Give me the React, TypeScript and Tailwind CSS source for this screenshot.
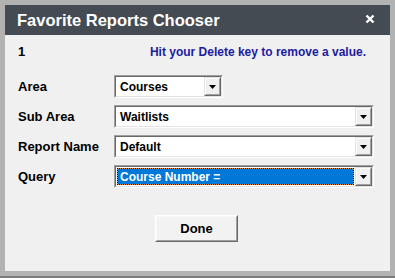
import React from "react";

const font = { fontFamily: '"Liberation Sans", Arial, sans-serif' };

function Arrow() {
  return (
    <div className="h-full w-[17px] shrink-0 border border-t-[#e3e3e3] border-l-[#e3e3e3] border-b-[#696969] border-r-[#696969]">
      <div className="flex h-full w-full items-center justify-center border border-t-white border-l-white border-b-[#a0a0a0] border-r-[#a0a0a0] bg-[#f0f0f0]">
        <svg width="7" height="4" viewBox="0 0 7 4">
          <path d="M0 0H7L3.5 4Z" fill="#000" />
        </svg>
      </div>
    </div>
  );
}

function Combo({ value, width, selected }: { value: string; width?: string; selected?: boolean }) {
  return (
    <div className={`h-[23px] border border-t-[#a0a0a0] border-l-[#a0a0a0] border-b-white border-r-white ${width ?? "w-full"}`}>
      <div className="flex h-full w-full items-stretch border border-t-[#696969] border-l-[#696969] border-b-[#e3e3e3] border-r-[#e3e3e3] bg-white">
        <div className="flex min-w-0 flex-1 items-stretch p-px">
          {selected ? (
            <div className="flex flex-1 items-stretch border border-dotted border-black bg-[#e8902a]">
              <div className="flex flex-1 items-center bg-[#0078d7] pl-[2px] text-[12px] font-bold text-white">
                {value}
              </div>
            </div>
          ) : (
            <div className="flex flex-1 items-center pl-[3px] text-[12px] font-bold text-black">{value}</div>
          )}
        </div>
        <Arrow />
      </div>
    </div>
  );
}

export default function App() {
  return (
    <div className="h-[278px] w-[395px] bg-[#b2b2b2] border-b-2 border-[#7c7c7c] pl-[5px] pr-[5px] pt-[5px] pb-[5px]" style={font}>
      <div className="flex h-full flex-col bg-[#f0f0f0]">
        <div className="flex h-[30px] shrink-0 items-center justify-between bg-[#444b53] pl-[12px] pr-[15px]">
          <span className="text-[16.5px] font-bold text-white">Favorite Reports Chooser</span>
          <svg width="10" height="10" viewBox="0 0 10 10" className="mb-[3px]">
            <path d="M1.5 1.5L8.5 8.5M8.5 1.5L1.5 8.5" stroke="#fff" strokeWidth="2.4" />
          </svg>
        </div>
        <div className="flex flex-1 flex-col pl-[13px] pr-[16px] pt-[9px]">
          <div className="flex h-[16px] items-center justify-between pr-[8px]">
            <span className="text-[13px] font-bold text-black">1</span>
            <span className="text-[12px] font-bold text-[#1c1ca0]">Hit your Delete key to remove a value.</span>
          </div>
          <div className="mt-[15px] grid grid-cols-[96px_1fr] gap-y-[7px]">
            <div className="flex items-center text-[13px] font-bold text-black">Area</div>
            <Combo value="Courses" width="w-[109px]" />
            <div className="flex items-center text-[13px] font-bold text-black">Sub Area</div>
            <Combo value="Waitlists" />
            <div className="flex items-center text-[13px] font-bold text-black">Report Name</div>
            <Combo value="Default" />
            <div className="flex items-center text-[13px] font-bold text-black">Query</div>
            <Combo value="Course Number =" selected />
          </div>
          <div className="mt-[27px] flex justify-center pl-[1px]">
            <div className="h-[27px] w-[83px] border border-t-white border-l-white border-b-[#696969] border-r-[#696969]">
              <div className="flex h-full w-full items-center justify-center border border-t-[#f8f8f8] border-l-[#f8f8f8] border-b-[#a0a0a0] border-r-[#a0a0a0] bg-[#f2f2f2] text-[13px] font-bold text-black">
                Done
              </div>
            </div>
          </div>
        </div>
      </div>
    </div>
  );
}
